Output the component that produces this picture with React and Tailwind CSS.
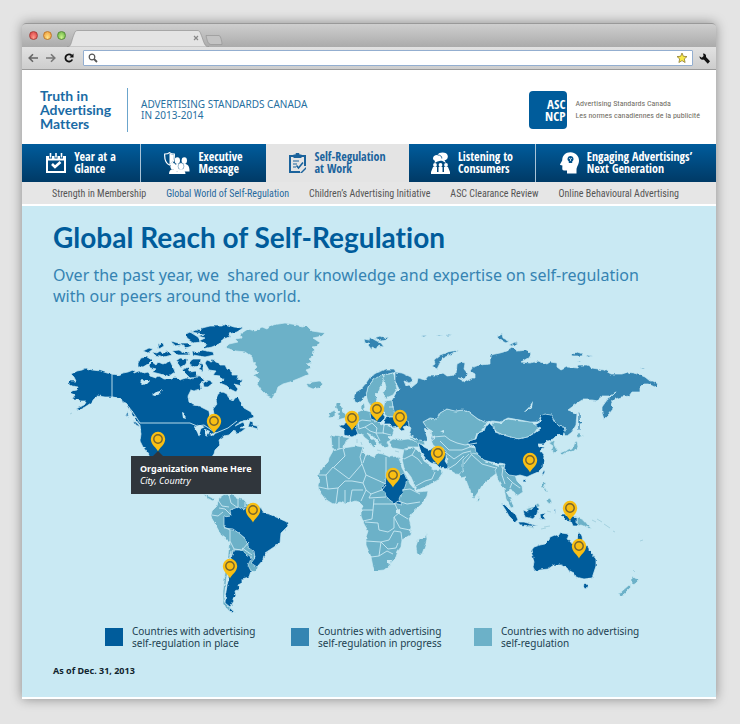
import React from "react";

const DARK = "#005c9b";
const MID = "#3485b2";
const LIGHT = "#6cb1c8";
const SEA = "#c9e9f3";

const lightLands = [
  // Greenland, Iceland
  "225,347 229,343 238,341 235,338 241,337 240,333 248,328 255,330 262,326 267,328 272,324 285,322 298,324 302,326 307,325 312,330 325,332 322,335 313,337 319,341 317,345 312,346 315,349 311,352 314,355 309,358 312,361 307,363 311,367 306,369 309,373 300,377 290,381 283,383 278,386 276,392 272,397 266,394 261,389 257,383 259,378 254,374 259,371 254,369 257,366 253,361 252,355 246,351 236,350",
  "306,382 310,383 312,381 319,380 323,383 319,387 313,388 308,386",
  // British Isles
  "336,402 341,402 340,405 343,407 343,410 346,414 345,417 337,419 340,415 337,413 340,411 336,407",
  "331,411 335,409 335,415 330,417 329,413",
  // Iberia
  "331,434 335,434 344,436 350,437 346,440 345,444 342,447 336,449 332,447",
  // Sweden, Finland
  "366,394 368,386 373,379 380,374 384,377 384,381 380,386 379,390 375,394 377,398 375,403 371,405 368,401",
  "382,374 388,373 394,373 395,380 397,388 393,394 386,397 382,393 386,386 384,379",
  // Denmark, Baltics
  "361,404 364,402 365,408 361,410",
  "385,400 392,399 393,406 400,411 396,416 386,416 383,409",
  // Central Europe, Balkans, Italy
  "352,418 358,412 364,409 371,411 372,418 378,421 384,424 390,425 394,429 392,435 388,436 391,439 387,441 389,445 385,448 382,445 378,440 371,434 367,432 371,437 377,442 373,446 369,440 364,436 362,433 357,433 354,425",
  // Turkey
  "389,441 393,438 400,439 408,438 417,440 419,446 408,446 404,449 393,447",
  // Caucasus
  "409,436 417,438 424,440 425,444 418,443",
  // Africa
  "333,450 343,447 357,445 363,446 363,450 366,453 374,456 377,452 383,453 390,456 398,455 400,460 402,467 407,476 410,483 417,491 428,490 427,495 422,503 413,511 409,518 411,526 410,534 402,539 401,546 398,550 396,556 389,565 384,569 375,570 373,566 371,556 366,544 366,536 368,530 364,523 361,515 361,509 363,505 359,501 355,500 346,503 340,501 333,503 325,498 319,490 318,484 320,479 318,474 323,466 328,461 330,455",
  "426,532 425,537 418,539 416,545 417,553 422,553 425,545 427,538",
  // Arabia and Levant
  "404,448 415,447 421,453 424,460 430,464 433,469 440,468 443,471 438,479 429,484 418,489 415,485 411,476 404,467 402,458",
  // Kazakhstan, Central Asia
  "423,421 430,417 437,418 440,412 447,408 457,410 463,409 470,412 479,419 487,421 484,428 477,432 475,438 468,442 470,446 476,447 477,454 471,457 464,463 463,474 456,473 448,468 447,460 445,450 437,447 433,444 431,439 435,437 430,434 432,430 427,427",
  // India and neighbours
  "463,459 470,452 477,453 485,460 492,462 497,465 505,463 504,468 497,472 493,475 489,478 483,483 479,490 474,497 471,492 467,482 465,476 461,477 459,473 463,470",
  "478,495 480,498 478,501 477,498",
  // Indochina
  "495,469 500,464 503,468 508,473 515,474 517,480 522,485 523,491 517,495 514,491 509,488 507,492 511,499 514,506 511,507 506,498 504,487 501,484 498,479",
  // Mongolia
  "492,421 500,422 508,418 520,420 532,421 539,425 535,431 528,436 518,438 503,434 495,430",
  // Korea, Japan
  "549,442 555,439 554,444 557,449 554,452 552,448 553,445",
  "576,434 578,431 580,434 584,434 578,437",
  "577,440 578,446 575,450 566,451 562,454 560,452 567,449 573,447 575,441",
  // Philippines
  "543,481 546,482 544,487 548,490 546,491 542,486",
  "546,499 550,497 552,501 548,502",
  // Northern Borneo, Papua New Guinea
  "526,508 532,506 538,502 540,505 535,508 530,511",
  "577,516 584,519 588,524 592,528 586,526 581,524 577,525",
  // New Zealand
  "619,594 622,590 629,584 631,586 626,591 623,595",
  "632,575 635,577 639,579 635,583 632,584 632,579",
  // Central America, northern and western South America
  "203,493 208,495 215,498 213,500 207,497",
  "219,497 223,494 232,493 237,497 244,499 247,502 256,504 262,507 258,515 246,518 238,525 240,532 248,541 256,550 254,558 258,567 254,571 249,569 247,562 240,553 233,549 230,560 227,575 225,590 224,600 227,604 232,608 236,612 229,610 223,603 223,590 225,572 229,556 230,541 221,534 215,523 211,516 212,510 217,505",
];

const midLands = [
  // Norway
  "355,401 354,395 356,391 361,388 366,382 370,376 376,372 382,370 386,368 394,368 396,371 388,373 381,374 373,379 368,386 366,394 362,399 358,402",
  // Russia
  "395,371 402,372 411,376 413,380 409,382 404,380 406,385 409,384 412,386 417,382 418,377 425,379 428,375 437,375 443,372 447,375 456,374 457,363 461,361 465,362 464,368 468,373 464,378 458,377 465,381 472,377 475,377 475,373 470,370 473,366 480,364 490,363 490,354 500,352 507,350 513,346 517,350 527,349 531,353 528,357 521,361 530,362 538,360 547,363 550,361 557,362 557,366 561,369 567,366 578,367 579,364 587,364 592,367 604,369 611,373 622,373 628,371 638,373 645,376 650,380 653,380 658,383 655,386 648,383 643,383 640,386 640,391 632,391 629,395 621,396 613,399 611,404 613,408 609,413 604,418 602,412 602,406 607,399 612,395 616,391 609,395 601,395 598,400 592,399 582,399 576,403 568,409 573,411 577,413 576,424 572,431 567,435 564,433 566,427 558,425 553,418 547,413 541,415 538,421 530,421 520,419 508,417 500,421 492,420 487,422 478,418 470,412 463,409 455,410 447,408 440,412 437,418 430,417 423,421 427,427 431,431 433,438 429,441 420,439 409,434 411,427 404,421 400,415 395,414 393,406 392,399 397,390 399,388 395,380",
  // Novaya Zemlya
  "432,365 435,363 434,359 440,354 448,351 459,349 452,353 443,357 440,362 437,368",
  // Svalbard
  "364,338 369,339 370,336 375,339 381,342 384,346 378,345 376,348 372,346 372,349 368,344 370,342 365,342",
  "374,337 380,335 384,337 389,336 386,339 381,340",
  // Arctic islands
  "497,336 502,333 503,337 509,340 506,342 500,339",
  "509,344 515,341 517,342 512,345",
  "571,352 575,353 577,351 583,353 582,355 572,355",
  "586,354 593,355 588,356",
  "577,360 581,360 580,361",
  "640,367 645,367 644,368",
  "421,335 427,334 424,336",
  "436,334 443,334 439,335",
  "446,335 449,333 453,334",
  // Sakhalin
  "578,412 580,413 580,419 583,422 580,423 580,429 578,429",
];

const darkLands = [
  // Alaska, Canada and the United States
  "71,373 77,370 82,369 86,367 92,369 101,370 107,372 118,374 123,372 128,371 133,369 134,372 139,370 144,372 148,371 150,375 156,377 159,375 164,378 172,378 175,375 179,379 186,377 191,378 194,374 200,375 205,379 200,383 201,388 194,390 191,389 188,395 189,401 193,404 199,405 205,408 209,410 210,416 213,417 214,413 213,408 217,403 216,398 218,393 223,391 227,393 229,398 233,400 235,397 238,396 241,402 244,407 251,411 253,416 247,419 240,421 235,425 243,421 245,424 240,427 246,427 241,431 236,432 234,429 229,434 224,435 219,439 220,444 215,449 214,453 211,457 211,469 150,469 149,454 143,446 140,440 141,433 140,424 135,418 131,411 128,404 123,401 119,397 112,396 105,396 98,395 94,398 91,402 85,406 79,409 76,408 84,404 86,400 80,400 78,398 72,398 75,394 70,392 72,390 77,389 78,386 72,385 68,382 70,380 76,380 74,376",
  // Newfoundland
  "250,420 253,421 253,424 257,425 258,428 251,426 248,426",
  // Vancouver and Queen Charlotte
  "133,419 138,423 140,426 136,424",
  "127,411 129,416 126,414",
  // Arctic archipelago
  "138,362 141,357 147,356 152,359 148,363 143,366 138,365",
  "149,364 152,361 156,364 158,361 163,363 170,360 173,366 175,371 169,375 160,373 152,371 157,368 150,367",
  "152,351 157,352 160,350 163,352 168,350 172,354 164,356 155,354",
  "143,350 149,347 153,348 148,352",
  "158,344 163,342 164,345 159,348",
  "171,340 178,342 182,344 174,345",
  "172,350 179,349 184,352 188,351 189,354 178,354",
  "186,333 190,331 198,336 201,341 193,342 187,338",
  "190,331 196,329 200,330 202,327 210,325 222,325 225,323 234,326 243,327 237,331 229,333 231,336 222,338 221,342 212,346 203,348 207,343 199,340 205,337 198,335 204,333",
  "180,342 188,342 192,345 186,347",
  "192,350 200,351 202,349 213,351 214,354 205,356 193,354",
  "176,360 180,357 187,358 186,363 181,367",
  "189,361 193,358 201,358 200,363 195,367 191,365",
  "182,369 188,366 189,371 196,370 198,376 190,377",
  "205,362 207,359 212,361 212,358 218,361 220,364 225,364 227,368 232,370 232,374 238,374 237,378 243,380 240,382 242,385 234,383 238,388 236,391 230,388 227,385 220,382 223,379 220,375 213,374 216,370 209,369",
  "203,382 208,379 213,382 208,386 204,386",
  "200,362 203,364 203,370 199,368",
  // Brazil
  "224,516 231,515 230,509 238,506 244,509 245,505 252,507 261,507 264,512 269,513 276,516 287,521 288,525 281,532 280,542 271,548 265,552 263,559 257,566 251,562 255,557 254,550 247,545 246,538 240,533 233,528 224,527 224,522",
  // Argentina
  "233,549 240,549 250,555 251,558 248,564 251,570 249,576 242,578 242,582 238,584 239,588 235,590 236,595 232,597 234,600 230,606 225,602 226,590 228,580 229,565 231,558",
  "230,607 235,612 229,611",
  // France
  "339,424 344,424 345,422 350,420 357,424 356,428 358,433 352,436 344,434 344,428 340,426",
  // Poland
  "370,412 376,410 383,412 385,417 381,421 377,420 371,418",
  // Ukraine
  "385,417 390,416 400,416 408,420 409,424 403,426 405,429 401,430 398,426 393,427 390,423 384,423",
  // Sudan
  "386,476 391,476 398,475 404,472 407,479 405,486 401,493 399,498 402,504 394,502 387,497 382,486 385,484",
  // Iran
  "418,442 422,444 424,446 430,449 434,446 441,447 446,450 446,457 445,460 449,466 447,468 440,467 436,463 431,462 426,458 421,451",
  // China
  "545,413 551,414 555,421 559,425 566,427 563,434 558,433 553,438 547,440 544,443 538,443 539,446 545,446 540,450 544,455 543,466 538,471 531,474 527,476 520,474 516,475 509,474 504,469 505,463 498,462 491,461 484,459 476,452 475,446 469,443 469,440 476,438 478,432 484,430 486,425 490,423 494,425 495,431 503,434 518,438 528,436 536,431 541,427 535,424 540,421 541,415",
  "523,479 526,478 525,481 523,481",
  "542,473 544,469 545,471 543,474",
  // Indonesia
  "501,502 505,504 510,509 516,514 518,519 515,521 509,515 505,508",
  "518,521 524,521 531,523 538,525 531,525 520,524",
  "523,509 528,511 532,508 536,503 538,508 537,513 533,518 525,516",
  "540,513 546,512 543,515 546,519 543,518 541,520",
  "554,508 556,509 555,513",
  "560,513 565,513 567,516 572,515 577,516 577,525 573,525 571,520 566,519",
  // Australia and Tasmania
  "531,550 534,546 540,544 545,543 549,539 550,536 555,534 558,536 561,532 569,533 567,539 574,543 577,540 578,534 579,530 582,535 583,542 588,546 591,551 596,557 596,565 592,577 584,578 576,576 574,571 570,569 570,572 567,567 562,564 554,564 548,568 540,569 535,571 533,567 534,560",
  "583,584 588,583 586,588 584,587",
];

const borders =
  "M112 372V396L120 398L127 404L132 410L140 422H190L197 425L204 424L216 432L228 427L237 420" +
  "M343 447L345 455L334 466M363 446L360 456L362 463L349 478L333 466L326 474H319M362 463L366 474L363 482M386 456V476M366 474L386 483M366 453L363 462M326 474L328 488L319 486M328 488L338 487L345 480L352 480L363 482L366 489L361 500M338 487L336 502M345 489V502M352 489L350 501M352 489L363 489M386 484L382 489L371 493L369 497L386 496M371 493L366 489M361 509H373L374 498M373 509L372 518L363 520M374 503L395 503L399 512L394 516L394 527L388 531L379 529L378 522L365 521M394 503L398 500L407 503L420 501M402 489L410 488L420 493M398 512L408 518M394 516L400 527L410 529M366 540L381 541L389 539L394 530L401 531L402 539M381 541L379 555L371 556M379 555L387 550L393 553M381 541L388 548L396 547L398 542" +
  "M404 458L412 454L418 458L422 463M412 454L416 447M416 485L425 480L432 478L435 471" +
  "M433 436L445 435L450 439L457 442L465 444L477 442M440 440L449 449L462 449L470 446M445 451L454 458L463 452L471 450M448 468L456 463L464 455M472 453L464 463M472 454L482 463L496 467M503 466L502 474L505 483M507 476L513 482L520 487M510 487L512 482" +
  "M352 418L358 421L362 419L371 420M358 421L359 428L365 426L372 422M365 426L370 430L376 432L384 432M372 422L377 427L376 432L380 440M384 424L383 432L391 434M339 436V448M389 406L394 406" +
  "M219 507L225 508L231 514M212 514L218 515L223 511M218 499L222 505L229 506M229 494L231 502L238 507M238 497L238 506M245 501V508M252 503L252 508M224 526L230 529L230 540M230 540L234 548L242 549L249 541M242 547L252 554M231 550L228 570L225 596";

const pins = [
  [352, 418], [377, 409], [400, 417], [438, 453], [393, 475], [214, 421],
  [158, 439], [253, 510], [230, 566], [530, 460], [570, 508], [579, 546],
];

const islands =
  "M70 413l2-1M592 519l4 2M597 518l5 3M604 523l6 4M613 530l2 1M640 540l3-1M633 569l2 2M544 526l6-1M547 510l4 1M527 525l7 2M541 528l5-1M377 449l4 1M395 450l4 1M357 438v4M361 441l1 3";

function Lands({ points, fill }) {
  return (
    <g fill={fill}>
      {points.map((p) => (
        <polygon key={p} points={p} />
      ))}
    </g>
  );
}

function WorldMap() {
  return (
    <svg viewBox="22 316 694 302" className="block w-full" role="img" aria-label="World map of advertising self-regulation">
      <defs>
        <filter id="coast" x="0" y="0" width="100%" height="100%">
          <feTurbulence type="fractalNoise" baseFrequency="0.22" numOctaves="2" seed="4" />
          <feDisplacementMap in="SourceGraphic" scale="3" xChannelSelector="R" yChannelSelector="G" />
        </filter>
      </defs>
      <g filter="url(#coast)">
        <g stroke={SEA} strokeWidth="0.7" strokeLinejoin="round">
          <Lands points={lightLands} fill={LIGHT} />
          <Lands points={midLands} fill={MID} />
          <Lands points={darkLands} fill={DARK} />
        </g>
        {/* lakes */}
        <g fill={SEA}>
          <path d="M140 381l3-2 2 1 5 0-3 3-4 1zM152 394l4-3 4-1 3-1-3 4-5 2zM182 411l2 1 2 6-3-1zM194 426l6-2 5 2-4 2-2 8-2-5zM205 428l5 2-3 6-2-3zM209 434l8-3-4 4zM524 411l5-5 4-6-1 6-6 5zM424 428l6 1 2 5-1 8 3 4-5 1-3-5 1-5zM396 509l4-1v5l-4-1zM388 559l4 0-1 4-3-1zM440 430l4-1v3z" />
        </g>
      </g>
      <path d={borders} fill="none" stroke={SEA} strokeWidth="0.9" strokeLinejoin="round" />
      <path d={islands} fill="none" stroke="#a5d2e0" strokeWidth="1" />
      {pins.map(([x, y]) => (
        <g key={`${x}-${y}`} transform={`translate(${x} ${y})`}>
          <path d="M0 11.500C-1 8-7.200 5-7.200-1A7.200 7.200 0 0 1 7.200-1C7.200 5 1 8 0 11.500Z" fill="#f9bf13" />
          <circle r="4.200" cy="-1" fill="none" stroke="#75652f" strokeWidth="1.400" />
        </g>
      ))}
    </svg>
  );
}

const Calendar = () => (
  <svg viewBox="0 0 20 20" className="size-5 shrink-0" fill="currentColor" aria-hidden="true">
    <path fillRule="evenodd" d="M0 3h3v2.500h3V3h2.500v2.500h3V3H14v2.500h3V3h3v17H0zM2 7.500V18h16V7.500z" />
    <path d="M3.700 0h1.600v4.500H3.700zM9.200 0h1.600v4.500H9.200zM14.700 0h1.600v4.500h-1.600z" />
    <path d="m6 11 3 3 5.500-5" fill="none" stroke="currentColor" strokeWidth="2.600" />
  </svg>
);

const ShieldPeople = () => (
  <svg viewBox="0 0 26 22" className="h-[22px] w-[26px] shrink-0" fill="currentColor" aria-hidden="true">
    <path d="M.7 2C3 2 4.500 1.500 5.500.6 6.500 1.500 8 2 10.300 2c.3 5-.8 9-4.800 11C1.500 11 .4 7 .7 2Z" fill="none" stroke="currentColor" strokeWidth="1.200" />
    <path d="M5.500 1.500v11C9 10.500 10 7 9.800 2.700 8 2.600 6.500 2.300 5.500 1.500Z" />
    <ellipse cx="13.300" cy="8.600" rx="2.700" ry="3.400" />
    <ellipse cx="20.300" cy="8.600" rx="2.700" ry="3.400" />
    <path d="M10 17c0-4 1.500-5 4-5h6.500c3.500 0 5 2 5 7.500H10z" />
    <ellipse cx="9" cy="14.300" rx="2.600" ry="3.200" />
    <ellipse cx="17" cy="14.300" rx="2.900" ry="3.500" stroke="#004a7d" strokeWidth=".4" />
    <path d="M5 22c0-3 1.500-4.700 4-4.700s3.800 1.200 4 3c.5-2 1.700-3 4-3s4.500 1.700 4.500 4.700z" />
  </svg>
);

const Clipboard = () => (
  <svg viewBox="0 0 17 20" className="h-5 w-[17px] shrink-0" fill="none" stroke="currentColor" aria-hidden="true">
    <path d="M16 13V3H1v16h10" strokeWidth="2" />
    <path d="M4.500 1.500h2a2 2 0 0 1 4 0h2v3.500h-8z" fill="currentColor" stroke="none" />
    <path d="M4 8h6M4 11h4M4 14h3" strokeWidth="1.200" />
    <path d="m7.500 12.500 2 2.500 4.500-5.500" strokeWidth="1.600" />
    <path d="m11 20 6-6v2l-4 4z" fill="currentColor" stroke="none" />
  </svg>
);

const Listeners = () => (
  <svg viewBox="0 0 19 22" className="h-[22px] w-[19px] shrink-0" fill="currentColor" aria-hidden="true">
    <path d="M2 6.500C2 4 4 2.800 6.500 3 8-.5 16.500-.3 16.800 4c.2 3-1.600 4-3.300 4.300L15 11l-4-2.200C9 8.600 8 9.500 6.500 9.500L3.500 11l.5-2.200C2.800 8.300 2 7.600 2 6.500Z" />
    <path d="M6.500 3c3 0 4.500 1.300 4.300 3.500" fill="none" stroke="#00508a" strokeWidth=".8" />
    <circle cx="4" cy="13" r="1.900" /><circle cx="9.500" cy="13" r="1.900" /><circle cx="15" cy="13" r="1.900" />
    <path d="M2 15h4v5H2zM7.500 15h4v5h-4zM13 15h4v5h-4zM0 20h19v2H0z" />
    <path d="m2 15-2 5h3zM17 15l2 5h-3z" />
  </svg>
);

const HeadIdea = () => (
  <svg viewBox="0 0 19 22" className="h-[22px] w-[19px] shrink-0" fill="currentColor" aria-hidden="true">
    <path d="M10.500.3C15.500.3 19 4 19 8.500c0 4.200-2.500 6-2.500 9.500v3.500H7V18.500H4c-1.500 0-1.800-1-1.700-2.500l.1-2.500-2.100-.6c-.5-.3-.2-.8.2-1.400l1.700-3C2.200 3.500 5.500.3 10.500.3Z" />
    <path d="M10.500 4a3 3 0 0 0-1.700 5.500V11h3.400V9.500A3 3 0 0 0 10.500 4Z" fill="#00508a" />
    <path d="m10.500 9V7m-1.500-.8 1.500.8 1.500-.8" stroke="white" strokeWidth=".7" fill="none" />
  </svg>
);

const tabs = [
  { lines: ["Year at a", "Glance"], Icon: Calendar },
  { lines: ["Executive", "Message"], Icon: ShieldPeople },
  { lines: ["Self-Regulation", "at Work"], Icon: Clipboard, active: true },
  { lines: ["Listening to", "Consumers"], Icon: Listeners },
  { lines: ["Engaging Advertisings’", "Next Generation"], Icon: HeadIdea },
];

const subLinks = [
  "Strength in Membership",
  "Global World of Self-Regulation",
  "Children’s Advertising Initiative",
  "ASC Clearance Review",
  "Online Behavioural Advertising",
];

const legend = [
  { lines: ["Countries with advertising", "self-regulation in place"], color: "bg-[#005c9b]" },
  { lines: ["Countries with advertising", "self-regulation in progress"], color: "bg-[#3485b2]" },
  { lines: ["Countries with no advertising", "self-regulation"], color: "bg-[#6cb1c8]" },
];

function BrowserChrome() {
  return (
    <div>
      <div className="flex h-6 items-end rounded-t-sm border-t border-[#999] bg-linear-to-b from-[#cfcfcf] to-[#ababab]">
        <div className="flex items-center gap-[5px] self-center pl-[7px]">
          <button aria-label="Close window" className="size-[9px] rounded-full border border-[#a8423c] bg-radial-[at_50%_80%] from-[#ff9d8d] to-[#d8343a]" />
          <button aria-label="Minimise window" className="size-[9px] rounded-full border border-[#bd7a2b] bg-radial-[at_50%_80%] from-[#ffe58a] to-[#ef9330]" />
          <button aria-label="Zoom window" className="size-[9px] rounded-full border border-[#5a8c3c] bg-radial-[at_50%_80%] from-[#cdf58c] to-[#5ead3c]" />
        </div>
        <div className="relative ml-px h-[17px] w-[142px]">
          <svg viewBox="0 0 142 17" className="block h-full w-full" aria-hidden="true">
            <path d="M0 17c4 0 4-4 6-10C8 2 8 .5 11 .5h119c3 0 3 1.500 5 6.500 2 6 3 10 7 10z" fill="#e4e4e4" stroke="#939393" strokeWidth=".7" />
          </svg>
          <button aria-label="Close tab" className="absolute top-1 right-[9px]">
            <svg viewBox="0 0 8 8" className="size-2" stroke="#888" strokeWidth="1.200" aria-hidden="true"><path d="m2 2 4 4M6 2 2 6" /></svg>
          </button>
        </div>
        <button aria-label="New tab" className="-ml-1 mb-[2px]">
          <svg viewBox="0 0 18 10" className="h-[10px] w-[18px]" aria-hidden="true">
            <path d="M1 .5h13c2 0 3 8 3 9H6C3 9.500 2 5 1 .5Z" fill="#c3c3c3" stroke="#959595" strokeWidth=".7" />
          </svg>
        </button>
      </div>
      <div className="flex h-[23px] items-center border-b border-[#9b9b9b] bg-linear-to-b from-[#e2e2e2] to-[#cdcdcd] pr-1.5 pl-1.5">
        <div className="flex items-center gap-2">
          <button aria-label="Back"><svg viewBox="0 0 10 10" className="size-[10px]" fill="none" stroke="#666" strokeWidth="1.600"><path d="M10 5H1.500M5 1.200 1.200 5 5 8.800" /></svg></button>
          <button aria-label="Forward"><svg viewBox="0 0 10 10" className="size-[10px]" fill="none" stroke="#777" strokeWidth="1.600"><path d="M0 5h8.500M5 1.200 8.800 5 5 8.800" /></svg></button>
          <button aria-label="Reload"><svg viewBox="0 0 10 10" className="size-[10px]" fill="none" stroke="#111" strokeWidth="1.800"><path d="M8.300 6.500A3.600 3.600 0 1 1 7.700 2.600" /><path d="M9.500.5v4h-4z" fill="#111" stroke="none" /></svg></button>
        </div>
        <div className="ml-[9px] flex h-4 flex-1 items-center rounded-[1px] border border-[#93aed0] bg-white px-1">
          <svg viewBox="0 0 10 10" className="size-[10px]" fill="none" stroke="#555" aria-hidden="true"><circle cx="4" cy="4" r="2.800" strokeWidth="1.200" /><path d="m6 6 3 3" strokeWidth="1.800" /></svg>
          <input aria-label="Address" className="h-3 min-w-0 flex-1 bg-transparent px-1 font-['Liberation_Sans',sans-serif] text-[10px] outline-none" />
          <button aria-label="Bookmark this page"><svg viewBox="0 0 12 12" className="size-3" fill="#f7e948" stroke="#8f7c32" strokeWidth=".8"><path d="m6 1 1.400 3.300 3.600.3-2.700 2.300.8 3.600L6 8.600l-3.100 1.900.8-3.600L1 4.600l3.600-.3z" /></svg></button>
        </div>
        <button aria-label="Settings" className="ml-1.5"><svg viewBox="0 0 11 11" className="size-[11px]" fill="#111"><path d="M4 .5C6 .3 7.600 2 7 4l4 4.300L8.800 10.700 4.800 6.500C2.500 7.300.3 5.500.5 3.200l2.300 1.600L4.600 3z" /></svg></button>
      </div>
    </div>
  );
}

export default function App() {
  return (
    <div className="bg-[#e4e4e4] pt-[23px] pr-6 pb-[25px] pl-[22px] font-['Noto_Sans','Open_Sans',sans-serif]">
      <div className="rounded-t-sm bg-white shadow-[0_0_12px_rgba(0,0,0,0.4)]">
        <BrowserChrome />

        <header className="flex h-[74px] items-center justify-between pt-1.5 pr-4 pl-[18px]">
          <div className="flex items-center">
            <p className="w-[87px] font-['Lato',sans-serif] text-[14px] leading-[14px] font-bold text-[#1a6ba5] [font-variant-ligatures:none]">
              Truth in<br />Advertising<br />Matters
            </p>
            <p className="flex h-11 items-center border-l border-[#6ba5cc] pl-[13px] text-[10px] leading-[11px] text-[#276f9f] uppercase">
              <span>Advertising Standards Canada<br />in 2013-2014</span>
            </p>
          </div>
          <a href="#home" className="flex items-center gap-2">
            <span className="flex size-[38px] items-center justify-end rounded bg-[#005c9b] pr-0.5 text-right font-['Open_Sans_Condensed','Roboto_Condensed',sans-serif] text-[13px] leading-3 font-bold text-white">
              ASC<br />NCP
            </span>
            <span className="font-['Roboto_Condensed','Roboto',sans-serif] text-[8px] leading-3 text-[#6e6b62]">
              Advertising Standards Canada<br />Les normes canadiennes de la publicité
            </span>
          </a>
        </header>

        <nav aria-label="Sections" className="grid h-[38px] grid-cols-[119fr_125fr_143fr_127fr_180fr] font-['Open_Sans_Condensed','Noto_Sans_Condensed','Lato',sans-serif]">
          {tabs.map(({ lines, Icon, active }, i) => (
            <a
              key={lines[0]}
              href="#section"
              className={`flex items-center justify-center gap-2 text-[12px] leading-3 font-bold whitespace-nowrap [font-variant-ligatures:none] ${
                active ? "bg-[#e4e4e4] text-[#1b639c]" : "bg-linear-to-b from-[#005c9c] to-[#003a66] text-white"
              } ${i === 0 || i === 3 ? "border-r border-[#a9c4d8]" : ""}`}
            >
              <Icon />
              <span>{lines[0]}<br />{lines[1]}</span>
            </a>
          ))}
        </nav>

        <nav aria-label="Pages" className="flex h-6 items-center gap-5 border-b-2 border-white bg-[#e6e6e6] pl-[30px] font-['Roboto_Condensed','Roboto',sans-serif] text-[10px] whitespace-nowrap text-[#555]">
          {subLinks.map((l, i) => (
            <a key={l} href="#page" className={i === 1 ? "text-[#26699d]" : ""}>{l}</a>
          ))}
        </nav>

        <main className="border-b-2 border-white bg-[#c9e9f3] pb-[18px]">
          <div className="px-[31px] pt-[15px]">
            <h1 className="font-['Lato',sans-serif] text-[28px] leading-8 font-bold text-[#005c9b] [font-variant-ligatures:none]">Global Reach of Self-Regulation</h1>
            <p className="mt-3 text-[16px] leading-[21px] whitespace-pre-wrap text-[#3583b2]">
              {"Over the past year, we  shared our knowledge and expertise on self-regulation\nwith our peers around the world."}
            </p>
          </div>

          <div className="relative mt-2.5">
            <WorldMap />
            <div className="absolute top-[46%] left-[109px] w-[130px] bg-[#30363c] px-[9px] py-[7px] text-white">
              <span className="absolute -top-[5px] left-[21px] border-x-[6px] border-b-[6px] border-x-transparent border-b-[#30363c]" />
              <p className="text-[9px] leading-3 font-bold whitespace-nowrap">Organization Name Here</p>
              <p className="text-[9px] leading-3 italic">City, Country</p>
            </div>
          </div>

          <ul className="grid grid-cols-[186fr_183fr_242fr] pt-1.5 pl-[83px] text-[10px] leading-3 text-[#1c3f50]">
            {legend.map((l) => (
              <li key={l.lines.join()} className="flex items-center gap-[9px] whitespace-nowrap">
                <span className={`size-[18px] ${l.color}`} />
                <span>{l.lines[0]}<br />{l.lines[1]}</span>
              </li>
            ))}
          </ul>
          <p className="mt-3.5 pl-[31px] text-[9px] leading-4 font-bold text-[#10242e]">As of Dec. 31, 2013</p>
        </main>
      </div>
    </div>
  );
}
